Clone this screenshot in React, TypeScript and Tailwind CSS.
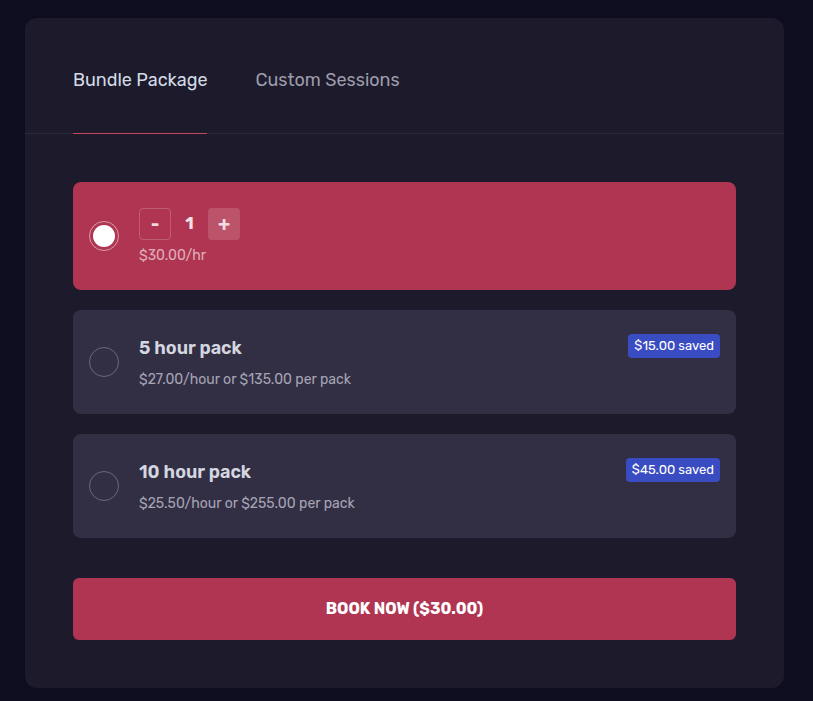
import { useState } from "react";

const packs = [
  { id: "5", title: "5 hour pack", sub: "$27.00/hour or $135.00 per pack", saved: "$15.00 saved" },
  { id: "10", title: "10 hour pack", sub: "$25.50/hour or $255.00 per pack", saved: "$45.00 saved" },
];

export default function App() {
  const [hours, setHours] = useState(1);

  return (
    <div
      className="min-h-screen bg-[#0e0c1f] pl-[25px] pr-[29px] pt-[18px] pb-[13px]"
      style={{ fontFamily: "Rubik, Inter, 'Noto Sans', sans-serif" }}
    >
      <div className="rounded-xl bg-[#1c1a2b]">
        {/* Tabs */}
        <div className="flex gap-12 border-b border-[#2a2839] px-12">
          <button className="-mb-px h-[116px] border-b border-[#c4465f] pt-[9px] text-[18px] text-[#d2dae6]">
            Bundle Package
          </button>
          <button className="h-[115px] pt-[9px] text-[18px] text-[#9d9cab]">Custom Sessions</button>
        </div>

        <div className="flex flex-col gap-5 px-12 pt-12 pb-12">
          {/* Hourly option */}
          <div className="flex h-[108px] items-center gap-5 rounded-lg bg-[#b03552] px-4">
            <div className="flex h-[30px] w-[30px] items-center justify-center rounded-full border border-white/50">
              <div className="h-[22px] w-[22px] rounded-full bg-white" />
            </div>
            <div className="flex flex-col gap-[5px] pt-[2px]">
              <div className="flex items-center">
                <button
                  onClick={() => setHours(Math.max(1, hours - 1))}
                  className="flex h-8 w-8 items-center justify-center rounded border border-white/20 text-[18px] font-bold text-white/80"
                >
                  -
                </button>
                <span className="w-[37px] text-center text-[17px] font-bold text-white/85">{hours}</span>
                <button
                  onClick={() => setHours(hours + 1)}
                  className="flex h-8 w-8 items-center justify-center rounded bg-white/15 text-[20px] font-bold text-white/80"
                >
                  +
                </button>
              </div>
              <span className="text-[14px] text-white/60">${(30 * hours).toFixed(2)}/hr</span>
            </div>
          </div>

          {packs.map((p) => (
            <div key={p.id} className="relative flex h-[104px] items-center gap-5 rounded-lg bg-[#322f44] px-4">
              <div className="h-[30px] w-[30px] rounded-full border border-[#6a6878]" />
              <div className="flex flex-col gap-[7px]">
                <span className="text-[18px] font-semibold text-[#d4d6e0]">{p.title}</span>
                <span className="text-[14px] text-[#a5a4b4]">{p.sub}</span>
              </div>
              <span className="absolute right-4 top-6 rounded bg-[#3a4cc2] px-[6px] py-[2px] text-[13px] text-white">
                {p.saved}
              </span>
            </div>
          ))}

          <button className="mt-5 h-[62px] rounded-md bg-[#b03552] text-[16px] font-bold text-white">
            BOOK NOW (${(30 * hours).toFixed(2)})
          </button>
        </div>
      </div>
    </div>
  );
}
